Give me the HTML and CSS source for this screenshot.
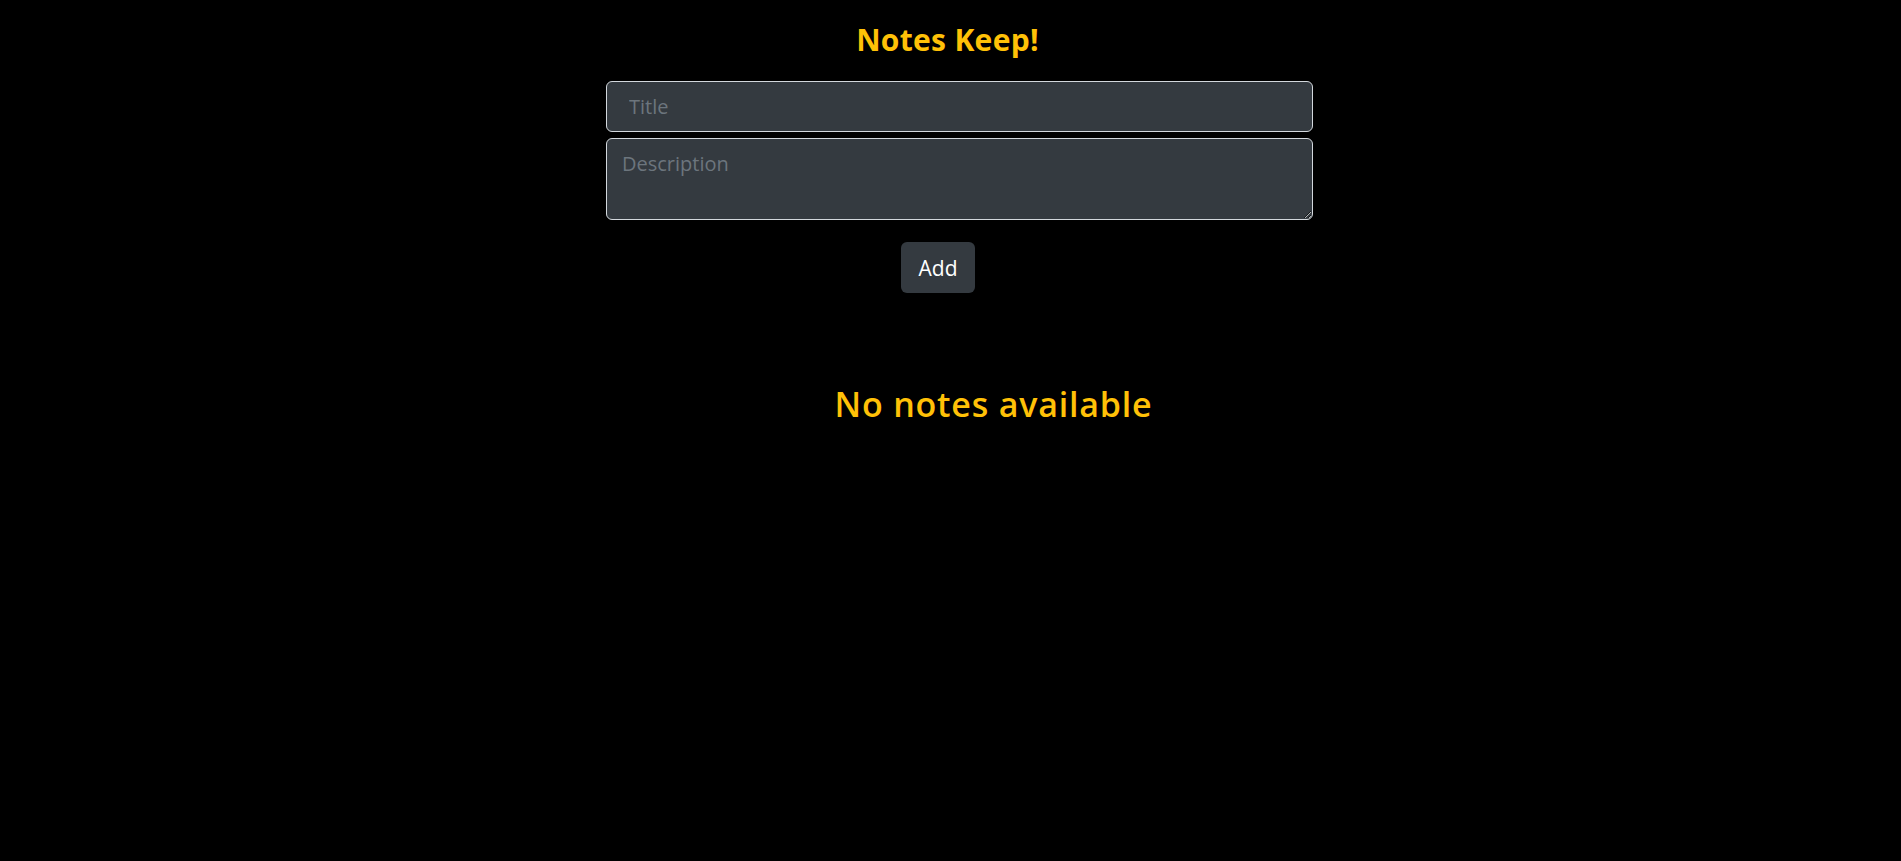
FILE: index.html
```html
<!DOCTYPE html>
<html lang="en">
<head>
<meta charset="utf-8">
<title>Notes Keep!</title>
<link rel="stylesheet" href="styles.css">
</head>
<body>
<div class="app">
  <h1 class="brand">Notes Keep!</h1>
  <form class="note-form">
    <input class="field title-field" type="text" placeholder="Title">
    <textarea class="field desc-field" placeholder="Description"></textarea>
    <div class="actions">
      <button class="btn-add" type="button">Add</button>
    </div>
  </form>
  <h2 class="empty">No notes available</h2>
</div>
</body>
</html>
```

FILE: styles.css
```css
html, body {
  margin: 0;
  padding: 0;
  background: #000;
}
body {
  font-family: "Open Sans", "Noto Sans", sans-serif;
  color: #fff;
}
.app {
  display: flex;
  flex-direction: column;
}
.brand {
  margin: 23px 0 24px;
  padding-right: 6px;
  font-size: 30px;
  line-height: 34px;
  font-weight: 700;
  letter-spacing: 0.3px;
  color: #ffc107;
  text-align: center;
}
.note-form {
  margin: 0 0 0 606px;
  width: 707px;
  display: flex;
  flex-direction: column;
}
.field {
  box-sizing: border-box;
  width: 100%;
  background: #343a40;
  border: 1px solid #d3d8dd;
  border-radius: 6px;
  color: #fff;
  font-family: "Open Sans", "Noto Sans", sans-serif;
  font-size: 20px;
  outline: none;
  margin: 0;
}
.field::placeholder {
  color: #6c757d;
  opacity: 1;
}
.title-field {
  height: 51px;
  padding: 0 15px 0 22px;
}
.desc-field {
  height: 82px;
  margin-top: 6px;
  padding: 10px 15px;
  line-height: 30px;
  resize: vertical;
  display: block;
}
.actions {
  display: flex;
  padding-left: 295px;
  margin-top: 22px;
}
.btn-add {
  width: 74px;
  height: 51px;
  display: flex;
  align-items: center;
  justify-content: center;
  padding: 0;
  background: #343a40;
  color: #fff;
  border: none;
  border-radius: 6px;
  font-family: "Open Sans", "Noto Sans", sans-serif;
  font-size: 21px;
}
.empty {
  margin: 91px 0 0;
  padding-left: 86px;
  font-size: 34px;
  line-height: 40px;
  font-weight: 600;
  letter-spacing: 0.8px;
  color: #ffc107;
  text-align: center;
}
```
